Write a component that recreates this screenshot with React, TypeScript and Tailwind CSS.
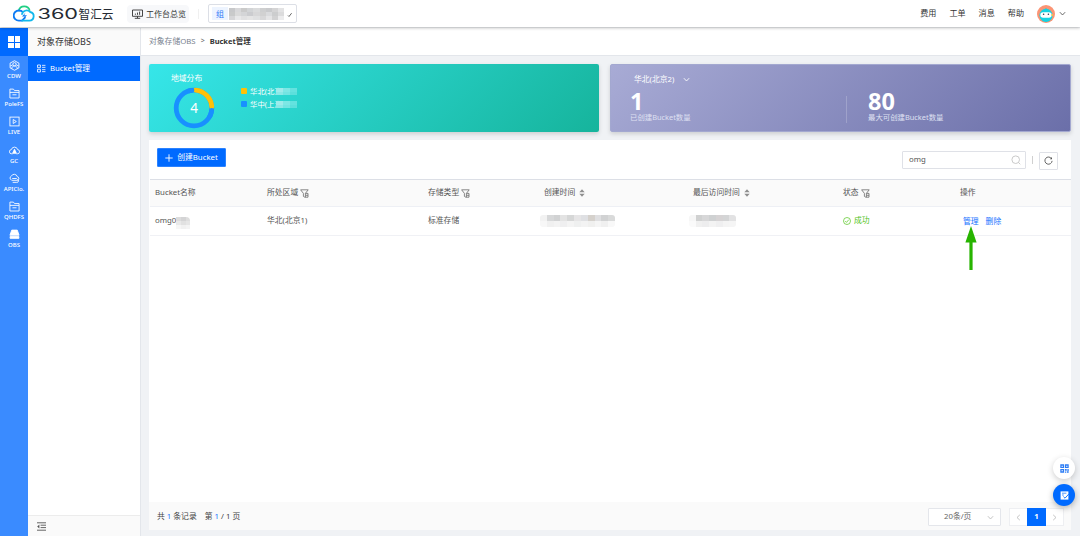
import type { ReactNode } from 'react';

const font = "font-['Noto_Sans','Noto_Sans_CJK_SC',sans-serif]";

const rail = [
  { label: 'CDW', icon: 'hex' },
  { label: 'PoleFS', icon: 'folder' },
  { label: 'LIVE', icon: 'play' },
  { label: 'GC', icon: 'cloudUp' },
  { label: 'APIClo.', icon: 'cloud' },
  { label: 'QHDFS', icon: 'folder' },
  { label: 'OBS', icon: 'disk' },
];

const railIcons: Record<string, ReactNode> = {
  hex: (
    <>
      <path d="M6 .8 10.8 3.4v5.2L6 11.2 1.2 8.6V3.4z" />
      <circle cx="6" cy="4.6" r="1.8" />
      <path d="M3 9.5c0-4 6-4 6 0M1.5 6.5 4 5.4M10.5 6.5 8 5.4" />
    </>
  ),
  folder: <path d="M1 10.9V1.2h3.8l1.2 1.6h5v8.1zM1 4.8h10M3.8 7.4h4.4" />,
  play: (
    <>
      <rect x="1" y="1.2" width="10" height="9.6" />
      <path d="M4.6 3.8 8 6 4.6 8.2z" />
    </>
  ),
  cloudUp: (
    <>
      <path d="M4 9.6H3A2.3 2.3 0 0 1 2.6 5a3.5 3.5 0 0 1 6.8 0A2.3 2.3 0 0 1 9 9.6H8" />
      <path d="M6 4.6 8 9H4z" fill="currentColor" />
    </>
  ),
  cloud: (
    <path d="M2.8 7.6A2.2 2.2 0 0 1 2.6 3.4 3.4 3.4 0 0 1 9 4a2 2 0 0 1 .6 3.8M3.5 6h5M3 8h6.5M4 10.2h4.5A1.6 1.6 0 0 0 9 7" />
  ),
  disk: (
    <>
      <path d="M3 1.2h6l2 5.6H1z" fill="currentColor" />
      <path d="M1.2 8.2h9.6v2H1.2z" fill="currentColor" />
    </>
  ),
};

function RailIcon({ name }: { name: string }) {
  return (
    <svg
      viewBox="0 0 12 12"
      className="h-[11px] w-[11px]"
      fill="none"
      stroke="currentColor"
      strokeWidth="0.95"
    >
      {railIcons[name]}
    </svg>
  );
}

function Chevron({ className }: { className: string }) {
  return (
    <svg viewBox="0 0 8 8" className={className} fill="none" stroke="currentColor">
      <path d="M1 2.5 4 5.7l3-3.2" />
    </svg>
  );
}

function FilterIcon() {
  return (
    <svg
      viewBox="0 0 9 9"
      className="h-[9px] w-[9px] text-[#6b6b6b]"
      fill="none"
      stroke="currentColor"
      strokeWidth="0.8"
    >
      <path d="M.6.8h7.6L5.4 4.4H8M.6.8l2.8 3.6v3l1.4.8H8M5.4 4.4v3.8M5.6 6.3H8M8 4.4v3.8" />
    </svg>
  );
}

function SortIcon() {
  return (
    <svg viewBox="0 0 6 8" className="ml-[2px] h-2 w-[6px]" fill="#8f8f8f">
      <path d="M3 .2 5.7 3.3H.3zM3 7.8.3 4.7h5.4z" />
    </svg>
  );
}

function Mosaic({ rows, className }: { rows: string[][]; className: string }) {
  return (
    <div className={`flex flex-col overflow-hidden ${className}`}>
      {rows.map((row, i) => (
        <div key={i} className="flex flex-1">
          {row.map((color, j) => (
            <span key={j} className="flex-1" style={{ background: color }} />
          ))}
        </div>
      ))}
    </div>
  );
}

function Logo() {
  return (
    <svg viewBox="0 0 102 20" className="ml-[13px] h-5 w-[102px]" fill="none">
      <path
        d="M5.6 7.2C6.3 4.1 8.5 2.4 11.2 2.4c2.8 0 4.9 1.7 5.5 4.4"
        stroke="#21cf83"
        strokeWidth="1.7"
      />
      <path
        d="M10 8.2C8.9 7 7.4 6.5 5.8 6.5a5 5 0 0 0 0 10.2h3.3l3.3-3.6"
        stroke="#0c7bf4"
        strokeWidth="1.8"
      />
      <path
        d="M8.4 16.7h8a4.4 4.4 0 0 0 .8-8.7c-2.8-2.9-8-1.4-8.3 2.8"
        stroke="#12b8ec"
        strokeWidth="1.8"
      />
      <path d="M12.6 8.6 9 12.4h3l-2.7 3.8 4.7-5h-2.8z" fill="#0c7bf4" />
      <text
        x="24.5"
        y="14.6"
        textLength="40.5"
        lengthAdjust="spacingAndGlyphs"
        fill="#252b33"
        className="font-[Inter,sans-serif] text-[13.8px]"
      >
        360
      </text>
      <text
        x="65.5"
        y="15"
        textLength="35"
        lengthAdjust="spacingAndGlyphs"
        fill="#252b33"
        className="font-['Noto_Sans_CJK_SC',sans-serif] text-[12px]"
      >
        智汇云
      </text>
    </svg>
  );
}

function Header() {
  return (
    <header className="relative z-10 flex h-[27px] shrink-0 items-center bg-white text-[8px] text-[#333] shadow-[0_1px_3px_rgba(0,0,0,0.25)]">
      <Logo />
      <div className="ml-3 flex h-[18px] w-[62px] items-center gap-[3px] rounded-sm bg-[#f7f8fa] pl-[5px] whitespace-nowrap">
        <svg
          viewBox="0 0 11 10"
          className="h-[10px] w-[11px] shrink-0"
          fill="none"
          stroke="#333"
          strokeWidth="0.9"
        >
          <path d="M.5 1h10v6.3H.5zM5.5 7.3v1.8M2.8 9.3h5.4M3.4 5.8V4.6M5.5 5.8V3.6M7.6 5.8V2.6" />
        </svg>
        工作台总览
      </div>
      <div className="ml-[9px] h-[10px] w-px bg-[#f0f0f0]" />
      <div className="ml-[9px] flex h-[19px] w-[89px] items-center rounded-[2px] border border-[#dcdfe6] pl-[3px]">
        <span className="flex h-[13px] w-4 items-center justify-center bg-[#edf4ff] text-[#2d7bf8]">
          组
        </span>
        <Mosaic
          className="ml-px h-3 w-[55px]"
          rows={[
            ['#c7c8ca', '#d8d8da', '#cacaca', '#d2d4d6', '#dadbdc', '#cecfd0', '#c9cacc', '#d4d4d5', '#e3e3e4'],
            ['#c9caca', '#dadada', '#d4d5d7', '#cbcccf', '#d7d7d8', '#d1d1d1', '#dadbdd', '#cccdce', '#dcdcdd'],
            ['#d6d6d8', '#e8e8e9', '#e1e1e2', '#e5e5e5', '#e0e1e2', '#d8d8d9', '#e5e5e6', '#d2d2d3', '#ececed'],
          ]}
        />
        <svg viewBox="0 0 6 6" className="mt-[2px] ml-[3px] h-[6px] w-[6px]" fill="none" stroke="#666">
          <path d="M1 3.5 2 4.5 4.6 1.2" />
        </svg>
      </div>
      <nav className="ml-auto flex items-center gap-[13px] text-[8.1px]">
        {['费用', '工单', '消息', '帮助'].map((label) => (
          <span key={label}>{label}</span>
        ))}
      </nav>
      <svg viewBox="0 0 18 18" className="ml-[13px] h-[18px] w-[18px]">
        <circle cx="9" cy="9" r="9" fill="#fb9474" />
        <path d="M9 2.8 10.2 5h-2.4z" fill="#17c9dc" />
        <circle cx="9" cy="10.3" r="6.6" fill="#14d2e2" />
        <rect x="3.3" y="7.2" width="11.4" height="5.6" rx="2.8" fill="#fff" />
        <circle cx="6.6" cy="9.3" r="0.8" fill="#263a59" />
        <circle cx="11.4" cy="9.3" r="0.8" fill="#263a59" />
        <circle cx="15.2" cy="10" r="1" fill="#f9c34a" />
      </svg>
      <Chevron className="mr-[14px] ml-1 h-[7px] w-[7px] text-[#555]" />
    </header>
  );
}

function Rail() {
  return (
    <aside className="w-7 shrink-0 bg-[#3a8bff] text-white">
      <div className="flex h-7 items-center justify-center bg-[#006aff]">
        <div className="grid grid-cols-2 gap-px">
          {[0, 1, 2, 3].map((i) => (
            <span key={i} className="h-[5.5px] w-[5.5px] bg-white" />
          ))}
        </div>
      </div>
      {rail.map(({ label, icon }) => (
        <div key={label} className="flex h-[28.2px] flex-col items-center pt-[4px]">
          <RailIcon name={icon} />
          <span className="mt-[2px] text-[6px] leading-[7px] font-medium">{label}</span>
        </div>
      ))}
    </aside>
  );
}

function Sidebar() {
  return (
    <aside className="flex w-[113px] shrink-0 flex-col border-r border-[#e3e6eb] bg-white">
      <div className="flex h-7 items-center bg-[#fafafa] pl-[9px] text-[9px] text-[#333]">
        对象存储OBS
      </div>
      <div className="flex h-[25px] items-center bg-[#006aff] pl-[9px] text-[7.7px] text-white">
        <svg
          viewBox="0 0 10 9"
          className="mr-[4px] h-[9px] w-[9px]"
          fill="none"
          stroke="currentColor"
          strokeWidth="0.9"
        >
          <path d="M.6.6h3.2v3H.6zM.6 5.4h3.2v3H.6zM5.6 1h3.8M5.6 3.2h3.8M5.6 5.8h3.8M5.6 8h3.8" />
        </svg>
        Bucket管理
      </div>
      <div className="mt-auto flex h-[21px] items-center border-t border-[#ececec] bg-[#fafafa] pl-[9px]">
        <svg viewBox="0 0 9 9" className="h-[9px] w-[9px]" fill="none" stroke="#555" strokeWidth="0.9">
          <path d="M0 .8h9M3.6 3.2H9M3.6 5.6H9M0 8.2h9" />
          <path d="M2.4 2.6v3.8L.2 4.5z" fill="#555" stroke="none" />
        </svg>
      </div>
    </aside>
  );
}

function RegionCard() {
  return (
    <div className="flex h-[68px] w-[450px] rounded-[2px] bg-linear-[135deg] from-[#36e6e9] to-[#16b49c] text-[7.8px] text-white shadow-[0_2px_4px_rgba(0,0,0,0.15)]">
      <div className="w-[92px] pt-[8px] pl-[22px]">
        <div className="h-[13px] leading-[13px]">地域分布</div>
        <svg viewBox="0 0 42 42" className="mt-[1.5px] ml-[2px] h-[42px] w-[42px]" fill="none" strokeWidth="4.8">
          <circle cx="21" cy="21" r="17.8" stroke="#1890ff" />
          <path d="M22.5 3.2A17.8 17.8 0 0 1 38.8 20" stroke="#ffc107" strokeLinecap="round" />
          <path d="M38.7 23.5A17.8 17.8 0 0 1 37 29" stroke="#1890ff" strokeLinecap="round" />
          <path d="M16 3.9A17.8 17.8 0 0 1 19 3.3" stroke="#1890ff" strokeLinecap="round" />
          <text x="21" y="25.8" textAnchor="middle" fill="#fff" stroke="none" className="text-[13.5px]">
            4
          </text>
        </svg>
      </div>
      <div className="flex flex-col pt-[21px]">
        {[
          { label: '华北(北京', color: 'bg-[#ffc107]' },
          { label: '华中(上海', color: 'bg-[#1890ff]' },
        ].map(({ label, color }) => (
          <div key={label} className="flex h-[12.7px] items-center">
            <span className={`h-[6px] w-[6px] rounded-[1px] ${color}`} />
            <span className="ml-[3px] text-[7.4px] leading-[12px] whitespace-nowrap">{label}</span>
            <Mosaic
              className="relative mt-[1px] -ml-[6px] h-[7px] w-[21px]"
              rows={[['#9eebeb', '#7de7e5', '#64e2df'], ['#8ce8e7', '#73e4e2', '#5cdfdc']]}
            />
          </div>
        ))}
      </div>
    </div>
  );
}

function QuotaCard() {
  return (
    <div className="flex h-[68px] w-[461px] flex-col rounded-[2px] border border-[#a3a8d0] bg-linear-[135deg] from-[#a8abd5] to-[#6b6fa9] text-[7.4px] text-white shadow-[0_2px_4px_rgba(0,0,0,0.15)]">
      <div className="flex h-[22px] items-center gap-[9px] pt-[6px] pl-[23px] text-[7.8px] leading-[12px]">
        <span>华北(北京2)</span>
        <Chevron className="h-[7px] w-[7px]" />
      </div>
      <div className="flex items-end pt-[3px]">
        <div className="w-[235px] pl-[19px]">
          <div className="h-[22px] text-[23.5px] leading-[22px] font-bold">1</div>
          <div className="leading-[11px] text-[#dfe0f2]">已创建Bucket数量</div>
        </div>
        <div className="h-[27px] w-px bg-white/20" />
        <div className="pl-[21px]">
          <div className="h-[22px] text-[23.5px] leading-[22px] font-bold">80</div>
          <div className="leading-[11px] text-[#dfe0f2]">最大可创建Bucket数量</div>
        </div>
      </div>
    </div>
  );
}

const cols = 'grid grid-cols-[112px_161px_116px_149px_150px_117px_1fr] items-center pl-[5px]';

const headers = [
  { label: 'Bucket名称' },
  { label: '所处区域', icon: <FilterIcon /> },
  { label: '存储类型', icon: <FilterIcon /> },
  { label: '创建时间', icon: <SortIcon /> },
  { label: '最后访问时间', icon: <SortIcon /> },
  { label: '状态', icon: <FilterIcon /> },
  { label: '操作' },
];

function Table() {
  return (
    <div className="ml-px">
      <div className={`${cols} h-7 border-t border-b border-t-[#dcdfe6] border-b-[#eef0f5] bg-[#fafafa] text-[#555]`}>
        {headers.map(({ label, icon }) => (
          <div key={label} className="flex items-center gap-[2px]">
            <span>{label}</span>
            {icon}
          </div>
        ))}
      </div>
      <div className={`${cols} h-[29px] border-b border-[#f0f1f5] text-[#555]`}>
        <div className="flex items-center">
          omg0
          <Mosaic
            className="mt-[4px] h-3 w-[14px] rounded-tr-[4px]"
            rows={[['#dcdcdc', '#d4d4d5', '#dedede'], ['#e9e9e9', '#e1e1e1', '#e6e6e6'], ['#f6f6f6', '#f1f1f1', '#f4f4f4']]}
          />
        </div>
        <div>华北(北京1)</div>
        <div>标准存储</div>
        <Mosaic
          className="-ml-1 h-3 w-[75px] rounded-[3px]"
          rows={[
            ['#f2f2f2', '#d7d8d9', '#d1d2d3', '#e3e3e3', '#d6d7d7', '#e6e5e6', '#dfe0e3', '#d5d1cc', '#dfdfe1', '#d1d2d3', '#d9dada'],
            ['#f7f7f7', '#f0f0f0', '#f3f3f3', '#efeff0', '#f4f4f4', '#eff0f0', '#f3f3f3', '#f0f0ef', '#f5f5f5', '#f0f0f0', '#f8f8f8'],
          ]}
        />
        <Mosaic
          className="-ml-1 h-3 w-[47px] rounded-[3px]"
          rows={[
            ['#f6f6f6', '#d0d1d1', '#d7d7d8', '#cfd1d2', '#d6d3d4', '#d4d5d6', '#e2e2e3'],
            ['#fafafa', '#f0f0f0', '#ededee', '#f3f3f3', '#efeff0', '#f4f4f4', '#f5f5f5'],
          ]}
        />
        <div className="flex items-center gap-[3px] text-[#52c41a]">
          <svg viewBox="0 0 8 8" className="h-2 w-2" fill="none" stroke="currentColor" strokeWidth="0.7">
            <circle cx="4" cy="4" r="3.5" />
            <path d="m2.2 4 1.3 1.4 2.3-2.7" />
          </svg>
          成功
        </div>
        <div className="relative flex gap-[7px] pt-px pl-[3px] text-[#1673ff]">
          <span>管理</span>
          <span>删除</span>
          <svg viewBox="0 0 12 45" className="absolute top-[11px] left-[5px] h-[45px] w-3" fill="#27b400">
            <path d="M6 0 11.6 16.5H7.6V44H4.4V16.5H.4z" />
          </svg>
        </div>
      </div>
    </div>
  );
}

function Panel() {
  return (
    <section className="mt-2 flex h-[390px] w-[922px] flex-col bg-white text-[7.8px]">
      <div className="flex h-[39px] shrink-0 items-center pr-[14px] pl-2">
        <button className="mb-[4px] flex h-[19px] w-[69px] items-center justify-center gap-[4px] rounded-[1px] border border-[#2b82ff] bg-[#006aff] whitespace-nowrap text-white">
          <svg viewBox="0 0 8 8" className="h-2 w-2 shrink-0" fill="none" stroke="currentColor" strokeWidth="0.9">
            <path d="M4 .3v7.4M.3 4h7.4" />
          </svg>
          创建Bucket
        </button>
        <div className="ml-auto flex h-[18px] w-[124px] items-center justify-between rounded-[1px] border border-[#dfe1e7] pr-[4px] pl-[6px] text-[#555]">
          omg
          <svg viewBox="0 0 10 10" className="h-[10px] w-[10px]" fill="none" stroke="#c4c4c4" strokeWidth="0.9">
            <circle cx="4.7" cy="4.7" r="3.8" />
            <path d="m7.4 7.4 1.9 1.9" />
          </svg>
        </div>
        <div className="mx-[6px] h-2 w-px bg-[#d0d0d0]" />
        <div className="mt-[2px] -mr-px flex h-[18px] w-[19px] items-center justify-center rounded-[1px] border border-[#dfe1e7]">
          <svg viewBox="0 0 10 10" className="h-[9px] w-[9px]" fill="none" stroke="#555" strokeWidth="1">
            <path d="M8.4 3A4 4 0 1 0 9 5.4" />
            <path d="M8.9 1v2.6H6.4z" fill="#555" stroke="none" />
          </svg>
        </div>
      </div>
      <Table />
      <div className="mt-auto flex h-7 items-center bg-[#fafafa] pt-[2px] pr-[7px] pl-2 text-[#444]">
        <span className="whitespace-pre">
          共 <span className="text-[#1673ff]">1</span> 条记录
        </span>
        <span className="ml-[8px] whitespace-pre">
          第 <span className="text-[#1673ff]">1</span> / 1 页
        </span>
        <div className="ml-auto flex h-[18px] w-[73px] items-center justify-between rounded-[1px] border border-[#e4e6eb] bg-white pr-[6px] pl-[15px] text-[#666]">
          20条/页
          <Chevron className="h-[7px] w-[7px] text-[#bbb]" />
        </div>
        <div className="ml-2 flex h-[18px] items-center border border-[#eeeff2] bg-white text-[#bbb]">
          <Chevron className="mx-[5px] h-[7px] w-[7px] rotate-90" />
          <span className="flex h-[18px] w-[19px] items-center justify-center bg-[#006aff] font-bold text-white">
            1
          </span>
          <Chevron className="mx-[5px] h-[7px] w-[7px] -rotate-90" />
        </div>
      </div>
    </section>
  );
}

function FloatingButtons() {
  return (
    <div className="absolute right-[5px] bottom-[30px] z-10 flex flex-col gap-[5px]">
      <div className="flex h-[22px] w-[22px] items-center justify-center rounded-full bg-white shadow-[0_2px_6px_rgba(0,0,0,0.2)]">
        <svg viewBox="0 0 9 9" className="h-[9px] w-[9px]" fill="#2b7cf5">
          <path
            fillRule="evenodd"
            d="M.3.3h3.8v3.8H.3zM1.5 1.7v1h1.4v-1zM4.9.3h3.8v3.8H4.9zM6.1 1.7v1h1.4v-1zM.3 4.9h3.8v3.8H.3zM1.5 6.3v1h1.4v-1z"
          />
          <path d="M4.9 4.9h1.8v1.8H4.9zM7.4 4.9h1.3v2H7.4zM4.9 7.4h1.2v1.3H4.9zM6.8 7.2h1.9v1.5H6.8z" />
        </svg>
      </div>
      <div className="flex h-[22px] w-[22px] items-center justify-center rounded-full bg-[#006aff] shadow-[0_2px_6px_rgba(0,0,0,0.3)]">
        <svg viewBox="0 0 9 9" className="h-[9px] w-[9px]" fill="none">
          <path d="M.6.4h7.8v8.2H.6z" fill="#fff" />
          <path d="M2 2.2h4.4M2 4h1.8" stroke="#006aff" strokeWidth="0.7" />
          <path d="M8.8 3 5 7.2 3.4 5.6" stroke="#006aff" strokeWidth="0.9" />
        </svg>
      </div>
    </div>
  );
}

function App() {
  return (
    <div className={`relative flex h-screen w-full flex-col overflow-hidden bg-[#f0f2f5] leading-normal ${font}`}>
      <Header />
      <div className="flex min-h-0 flex-1 pt-px">
        <Rail />
        <Sidebar />
        <main className="flex-1">
          <div className="flex h-7 items-center border-b border-[#e3e6eb] bg-white pl-2 text-[7.8px]">
            <span className="text-[#7a8390]">对象存储OBS</span>
            <span className="mx-[5px] text-[7px] text-[#666]">&gt;</span>
            <span className="text-[7.5px] font-bold text-[#333]">Bucket管理</span>
          </div>
          <div className="px-2 pt-2">
            <div className="flex gap-[11px]">
              <RegionCard />
              <QuotaCard />
            </div>
            <Panel />
          </div>
        </main>
      </div>
      <FloatingButtons />
    </div>
  );
}

export default App;
